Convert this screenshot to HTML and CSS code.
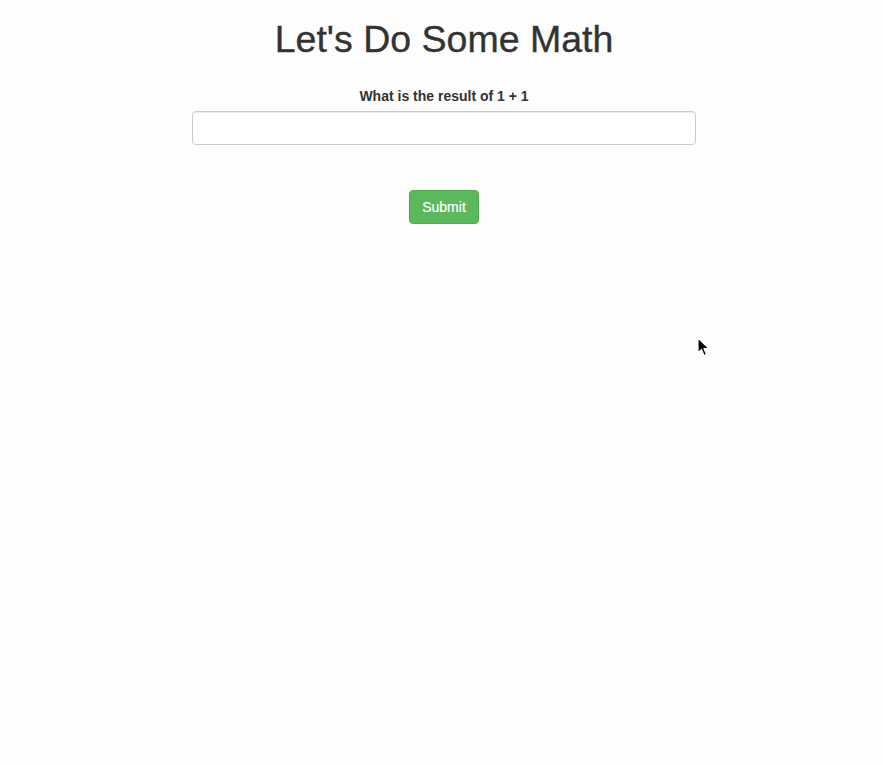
FILE: index.html
```html
<!DOCTYPE html>
<html>
<head>
<meta charset="utf-8">
<title>Let's Do Some Math</title>
<link rel="stylesheet" href="styles.css">
</head>
<body>
<main class="page">
  <h1 class="title">Let's Do Some Math</h1>
  <form class="quiz" onsubmit="return false">
    <label class="question" for="answer">What is the result of 1 + 1</label>
    <input class="answer" id="answer" type="text">
    <button class="submit" type="submit">Submit</button>
  </form>
</main>
<svg class="cursor" width="14" height="22" viewBox="0 0 14 22">
  <path d="M1 1 L1 16 L4.5 12.5 L7 18.5 L9.5 17.5 L7 11.5 L12 11.5 Z" fill="#000" stroke="#fff" stroke-width="1.2" stroke-linejoin="round"/>
</svg>
</body>
</html>
```
FILE: styles.css
```css
html, body {
  margin: 0;
  padding: 0;
  background: #fdfdfd;
}
body {
  font-family: "Liberation Sans", Arial, sans-serif;
  color: #333;
  font-size: 14px;
  line-height: 20px;
  min-height: 765px;
  position: relative;
}
.page {
  width: 504px;
  margin-left: 192px;
  display: flex;
  flex-direction: column;
  align-items: center;
}
.title {
  margin: 19px 0 0 0;
  font-size: 37.5px;
  line-height: 40px;
  font-weight: normal;
  color: #333;
  -webkit-text-stroke: 0.35px #333;
}
.quiz {
  width: 100%;
  display: flex;
  flex-direction: column;
  align-items: center;
  margin-top: 27px;
}
.question {
  font-weight: bold;
  font-size: 14px;
  line-height: 20px;
  margin-bottom: 5px;
}
.answer {
  box-sizing: border-box;
  width: 100%;
  height: 34px;
  border: 1px solid #ccc;
  border-radius: 4px;
  background: #fff;
  box-shadow: inset 0 1px 1px rgba(0,0,0,0.075);
  padding: 6px 12px;
  font-size: 14px;
  font-family: inherit;
  margin: 0;
}
.submit {
  box-sizing: border-box;
  margin-top: 45px;
  width: 70px;
  height: 34px;
  background: #5cb85c;
  border: 1px solid #4cae4c;
  border-radius: 4px;
  color: #fff;
  font-family: inherit;
  font-size: 14px;
  padding: 0;
  -webkit-text-stroke: 0.2px #fff;
}
.cursor {
  position: absolute;
  left: 697px;
  top: 337px;
}
```
